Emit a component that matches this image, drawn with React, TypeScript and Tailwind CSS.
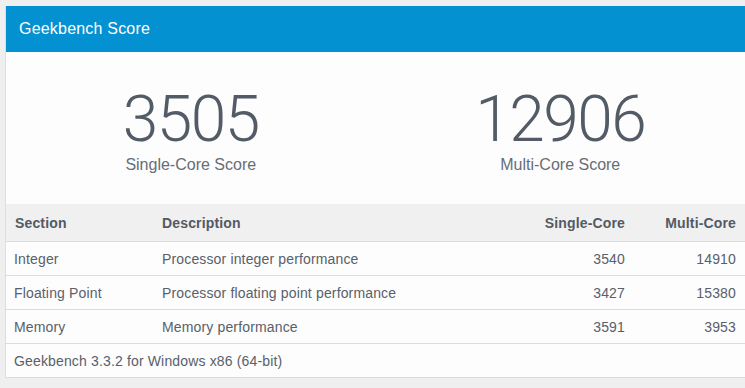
const rows = [
  { section: 'Integer', desc: 'Processor integer performance', single: '3540', multi: '14910' },
  { section: 'Floating Point', desc: 'Processor floating point performance', single: '3427', multi: '15380' },
  { section: 'Memory', desc: 'Memory performance', single: '3591', multi: '3953' },
]

function Score({ value, label }: { value: string; label: string }) {
  return (
    <div className="flex flex-1 flex-col items-center">
      <div className="text-[64px] leading-[60px] font-light tracking-[-1.5px] text-[#535b66]" style={{ fontFamily: 'Roboto, "Open Sans", sans-serif' }}>
        {value}
      </div>
      <div className="mt-[5px] text-[16px] leading-[20px] text-[#666d77]">{label}</div>
    </div>
  )
}

export default function App() {
  return (
    <div className="h-[388px] w-[745px] overflow-hidden bg-[#efefef] pt-[6px]" style={{ fontFamily: '"Liberation Sans", Arial, sans-serif' }}>
      <div className="ml-[5px] border-l border-[#dedede] bg-[#fdfdfd]">
        {/* header bar */}
        <div className="flex h-[46px] items-center bg-[#0491d1] px-[13px] text-[16px] leading-[20px] tracking-[0.2px] text-white">
          Geekbench Score
        </div>

        {/* big scores */}
        <div className="flex pt-[38px] pb-[29px]">
          <Score value="3505" label="Single-Core Score" />
          <Score value="12906" label="Multi-Core Score" />
        </div>

        {/* table */}
        <div className="text-[14px] leading-[20px] tracking-[0.15px] text-[#59606a]">
          <div className="flex border-b border-[#dcdcdc] bg-[#f0f0f0] pt-[9px] pb-[8px] font-bold text-[#535a64]">
            <div className="w-[147px] pl-[9px]">Section</div>
            <div className="flex-1 pl-[9px]">Description</div>
            <div className="w-[120px] pr-[9px] text-right">Single-Core</div>
            <div className="w-[111px] pr-[9px] text-right">Multi-Core</div>
          </div>
          {rows.map((r) => (
            <div key={r.section} className="flex border-b border-[#dcdcdc] pt-[7px] pb-[6px]">
              <div className="w-[147px] pl-[8px]">{r.section}</div>
              <div className="flex-1 pl-[9px]">{r.desc}</div>
              <div className="w-[120px] pr-[9px] text-right">{r.single}</div>
              <div className="w-[111px] pr-[9px] text-right">{r.multi}</div>
            </div>
          ))}
          <div className="border-b border-[#dcdcdc] pt-[7px] pb-[6px] pl-[8px]">
            Geekbench 3.3.2 for Windows x86 (64-bit)
          </div>
        </div>
      </div>
    </div>
  )
}
